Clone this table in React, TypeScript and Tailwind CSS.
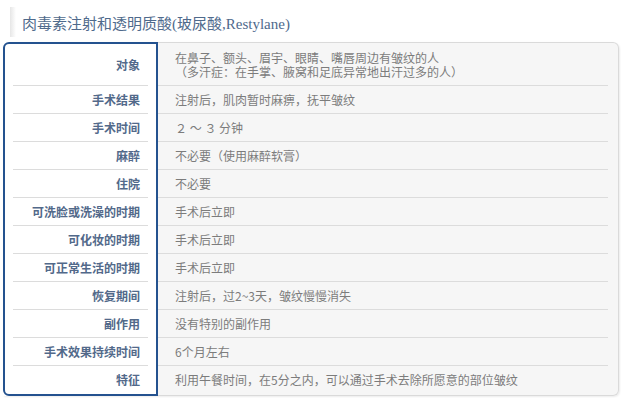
const rows: { label: string; value: string[] }[] = [
  {
    label: "对象",
    value: [
      "在鼻子、额头、眉宇、眼睛、嘴唇周边有皱纹的人",
      "（多汗症：在手掌、腋窝和足底异常地出汗过多的人）",
    ],
  },
  { label: "手术结果", value: ["注射后，肌肉暂时麻痹，抚平皱纹"] },
  { label: "手术时间", value: ["２ ～ ３ 分钟"] },
  { label: "麻醉", value: ["不必要（使用麻醉软膏）"] },
  { label: "住院", value: ["不必要"] },
  { label: "可洗脸或洗澡的时期", value: ["手术后立即"] },
  { label: "可化妆的时期", value: ["手术后立即"] },
  { label: "可正常生活的时期", value: ["手术后立即"] },
  { label: "恢复期间", value: ["注射后，过2~3天，皱纹慢慢消失"] },
  { label: "副作用", value: ["没有特别的副作用"] },
  { label: "手术效果持续时间", value: ["6个月左右"] },
  { label: "特征", value: ["利用午餐时间，在5分之内，可以通过手术去除所愿意的部位皱纹"] },
];

export default function App() {
  return (
    <div className="w-[621px] h-[398px] bg-white overflow-hidden font-['Noto_Sans_CJK_SC',sans-serif]">
      <div className="flex h-[42px] items-start pl-[10px] pt-[6px]">
        <span className="mt-[1px] h-[30px] w-[6px] bg-gradient-to-r from-[#e6e6e6] to-white"></span>
        <h1 className="ml-[6px] text-[15px] leading-[36px] text-[#4f6a8c] font-['Liberation_Serif','Noto_Sans_CJK_SC',serif] font-normal">
          肉毒素注射和透明质酸(玻尿酸,Restylane)
        </h1>
      </div>

      <div className="ml-[3px] flex w-[616px] shadow-[1px_1px_2px_rgba(0,0,0,0.08)] rounded-r-[6px]">
        <div className="w-[155px] shrink-0 rounded-l-[6px] border-2 border-[#24528f] bg-white px-[8px]">
          {rows.map((r, i) => (
            <div
              key={r.label}
              className={
                "flex items-center justify-end pr-[8px] text-[12px] font-bold text-[#52698a] " +
                (i === 0 ? "h-[42px] " : "h-[28px] ") +
                (i < rows.length - 1 ? "border-b border-[#dcdcdc]" : "")
              }
            >
              {r.label}
            </div>
          ))}
        </div>

        <div className="flex-1 rounded-r-[6px] border-y border-r border-[#dadada] bg-[#f6f6f6] pr-[10px] pt-[1px]">
          {rows.map((r, i) => (
            <div
              key={r.label}
              className={
                "flex flex-col justify-center pl-[17px] text-[12px] leading-[14px] text-[#7c7c7c] " +
                (i === 0 ? "h-[42px] " : "h-[28px] ") +
                (i < rows.length - 1 ? "border-b border-[#dcdcdc]" : "")
              }
            >
              {r.value.map((v) => (
                <span key={v}>{v}</span>
              ))}
            </div>
          ))}
        </div>
      </div>
    </div>
  );
}
